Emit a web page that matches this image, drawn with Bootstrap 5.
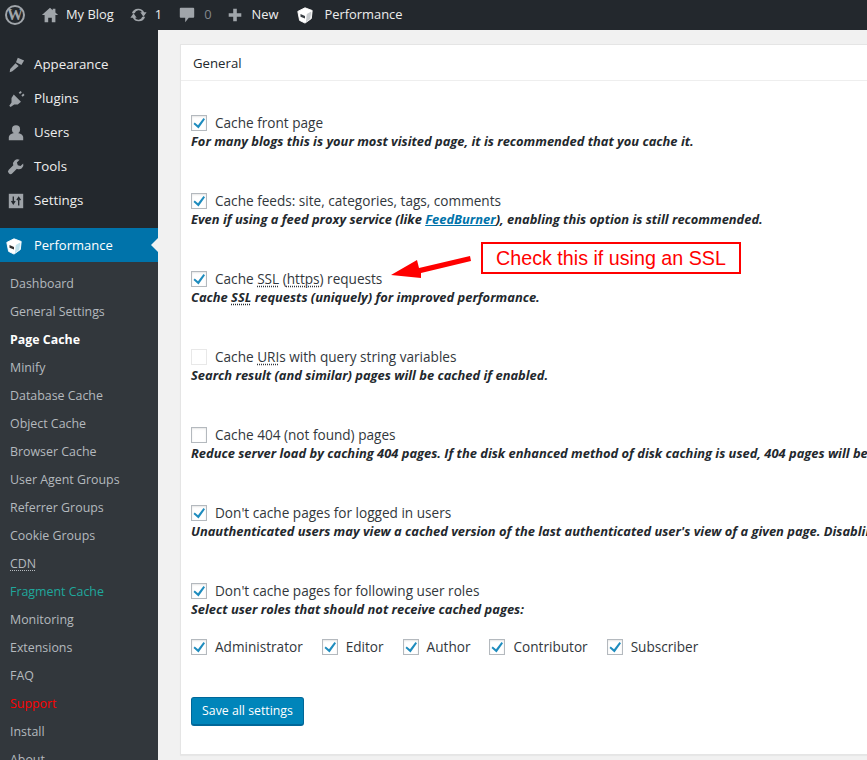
<!DOCTYPE html>
<html lang="en"><head><meta charset="utf-8"><title>Page Cache</title>
<link href="https://cdn.jsdelivr.net/npm/bootstrap@5.3.0/dist/css/bootstrap.min.css" rel="stylesheet">
<style>
html,body{height:760px;overflow:hidden;background:#f1f1f1;font-family:"Open Sans","Noto Sans",sans-serif;font-size:13px;color:#23282d}
.wpbar{height:30px;background:#23282d;color:#eee;font-size:12.9px;padding-left:5px}
.wpbar span.tx{line-height:28px;padding-bottom:2px}
.wpbar svg{fill:#a0a5aa;display:block;flex:none}
.wlogo{width:20px;height:20px;border:2px solid #a0a5aa;border-radius:50%;color:#a0a5aa;font:700 16px/16px "Liberation Serif",serif;text-align:center;flex:none;margin-right:16px}
.m7{margin-right:7px}.m8{margin-right:8px}.m10{margin-right:10px}.m14{margin-right:14px}.m15{margin-right:15px}.m16{margin-right:16px}.m18{margin-right:18px}
.tx.dim{color:#82878c}
.stage{height:730px;position:relative;overflow:hidden}
.sidebar{width:158px;background:#23282d;height:730px;overflow:hidden;flex:none;padding-top:17px}
.mitem{height:34px;color:#eee;font-size:13.3px;padding-left:7px;padding-top:2px;gap:9px}
.mitem svg{fill:#9ea3a8;width:18px;height:18px;flex:none}
.mitem.on{background:#0073aa;color:#fff;margin-top:11px;position:relative;padding-left:5px;gap:11px;font-size:13px}
.mitem.on::after{content:"";position:absolute;right:0;top:10px;border:7px solid transparent;border-right-color:#f1f1f1;border-left:0}
.submenu{background:#32373c;padding-top:8px;height:510px}
.subitem{height:28px;line-height:28px;padding-left:10px;color:#b4b9be;font-size:12.4px}
.subitem.cur{color:#fff;font-weight:700}
.subitem.teal{color:#1fa89c}
.subitem.red{color:#f00}
abbr.dot{text-decoration:underline dotted;text-underline-offset:2px;cursor:help}
.content{padding:14px 0 0 22px;min-width:0;flex:1}
.panel{width:760px;height:711px;background:#fff;border:1px solid #e5e5e5;box-shadow:0 1px 1px rgba(0,0,0,.04)}
.panelhead{height:36px;line-height:36px;padding-left:12px;border-bottom:1px solid #eee;color:#23282d;font-size:13.2px}
.panelbody{padding:33px 0 0 10px;white-space:nowrap}
.opt{height:36px;margin-bottom:42px}
.opt.tail{margin-bottom:20px}
.optline{height:18px;gap:8px;font-size:13.6px;color:#32373c}
.cb{width:16px;height:16px;flex:none;border:1px solid #b4b9be;background:#fff;box-shadow:inset 0 1px 2px rgba(0,0,0,.1);display:block}
.cb svg{display:block;width:14px;height:14px;fill:#1e8cbe}
.cb.off{border-color:#e8e8e8;box-shadow:none}
.hint{line-height:18px;font-style:italic;font-weight:700;font-size:12.9px;color:#23282d}
.hint a{color:#0073aa}
.roles{gap:19px;height:18px}
.saveb{margin-top:41px;display:block;height:29px;width:113px;padding:0;background:#0085ba;border:1px solid #006799;border-bottom-width:2px;border-radius:3px;color:#fff;font-size:12.3px}
.note{position:absolute;left:481px;top:212px;width:260px;height:32px;border:2px solid #f00;background:#fff;color:#f00;font:19.7px/28px "Liberation Sans",sans-serif;text-align:center}
.arrow{position:absolute;left:390px;top:220px;width:84px;height:30px}
</style></head><body>
<header class="wpbar d-flex align-items-center">
 <div class="wlogo">W</div>
 <svg class="m7" width="18" height="18" viewBox="0 0 20 20"><path d="M10 2 1 10h3v8h4v-5h4v5h4v-8h3l-3-2.700V3h-3v1.600z"/></svg><span class="tx m15">My Blog</span>
 <svg class="m7" width="19" height="18" viewBox="0 0 20 20"><path d="M10 3a7 7 0 0 1 6.300 4H19l-3.500 5L12 7h2a4.500 4.500 0 0 0-8.200 1H2.600A7.500 7.500 0 0 1 10 3zM1 13l3.500-5L8 13H6a4.500 4.500 0 0 0 8.200-1h3.200A7.500 7.500 0 0 1 10 17a7 7 0 0 1-6.300-4z"/></svg><span class="tx m16">1</span>
 <svg class="m8" width="18" height="18" viewBox="0 0 20 20"><path d="M3 2h14a1 1 0 0 1 1 1v9a1 1 0 0 1-1 1h-5l-4 5v-5H3a1 1 0 0 1-1-1V3a1 1 0 0 1 1-1z"/></svg><span class="tx dim m14">0</span>
 <svg class="m8" width="18" height="18" viewBox="0 0 20 20"><path d="M8 3h4v5h5v4h-5v5H8v-5H3V8h5z"/></svg><span class="tx m18">New</span>
 <svg class="m10" width="18" height="18" viewBox="0 0 20 20"><path d="M2 6l8-4 8 3-1 9-7 5-6-3z" fill="#fff" stroke="#fff" stroke-linejoin="round"/><path d="M12 9l5-3-1 8-5 4z" fill="#c9cccf"/><path d="M5 9l5 2v3l-5-2z" fill="#3a3f44"/></svg><span class="tx">Performance</span>
</header>
<div class="stage d-flex">
 <nav class="sidebar">
  <div class="mitem d-flex align-items-center"><svg viewBox="0 0 20 20"><path d="M12 2l7 3-3 5-6-3zM9.500 8l3.500 3-7 6-3 1 .5-3.500z"/></svg>Appearance</div>
  <div class="mitem d-flex align-items-center"><svg viewBox="0 0 20 20"><path d="M13 3l2-2 1.500 1.500-2 2zM16 6l2-2 1.500 1.500-2 2zM7.500 5l8 8-3.500 3H8l-4 3-1.500-1.500L5 14V9z"/></svg>Plugins</div>
  <div class="mitem d-flex align-items-center"><svg viewBox="0 0 20 20"><circle cx="10" cy="6" r="4.500"/><path d="M2 18v-3c0-3 3-5 8-5s8 2 8 5v3z"/></svg>Users</div>
  <div class="mitem d-flex align-items-center"><svg viewBox="0 0 20 20"><path d="M18 6l-3 3-3-1-1-3 3-3a5 5 0 0 0-7 6L2 13a2.500 2.500 0 0 0 4 4l5-5a5 5 0 0 0 7-6z"/></svg>Tools</div>
  <div class="mitem d-flex align-items-center"><svg viewBox="0 0 20 20"><path d="M2 2h16v16H2z"/><path d="M7 5v7M5 10l2 3 2-3M13 15V8M11 9l2-3 2 3" fill="none" stroke="#23282d" stroke-width="1.500"/></svg>Settings</div>
  <div class="mitem on d-flex align-items-center"><svg viewBox="0 0 20 20"><path d="M2 6l8-4 8 3-1 9-7 5-6-3z" fill="#fff" stroke="#fff" stroke-linejoin="round"/><path d="M12 9l5-3-1 8-5 4z" fill="#bfe3ee"/><path d="M5 9l5 2v3l-5-2z" fill="#333"/></svg>Performance</div>
  <div class="submenu">
   <div class="subitem">Dashboard</div><div class="subitem">General Settings</div><div class="subitem cur">Page Cache</div><div class="subitem">Minify</div><div class="subitem">Database Cache</div><div class="subitem">Object Cache</div><div class="subitem">Browser Cache</div><div class="subitem">User Agent Groups</div><div class="subitem">Referrer Groups</div><div class="subitem">Cookie Groups</div><div class="subitem"><abbr class="dot">CDN</abbr></div><div class="subitem teal">Fragment Cache</div><div class="subitem">Monitoring</div><div class="subitem">Extensions</div><div class="subitem">FAQ</div><div class="subitem red">Support</div><div class="subitem">Install</div><div class="subitem">About</div>
  </div>
 </nav>
 <main class="content">
  <section class="panel">
   <div class="panelhead">General</div>
   <div class="panelbody">
    <div class="opt"><div class="optline d-flex align-items-center"><span class="cb"><svg viewBox="0 0 14 14"><path d="M11.500 2 13 3.200 6.500 12.500 1.500 8l1.200-1.500 3.300 2.800z"/></svg></span>Cache front page</div><div class="hint">For many blogs this is your most visited page, it is recommended that you cache it.</div></div>
    <div class="opt"><div class="optline d-flex align-items-center"><span class="cb"><svg viewBox="0 0 14 14"><path d="M11.500 2 13 3.200 6.500 12.500 1.500 8l1.200-1.500 3.300 2.800z"/></svg></span>Cache feeds: site, categories, tags, comments</div><div class="hint">Even if using a feed proxy service (like <a href="#">FeedBurner</a>), enabling this option is still recommended.</div></div>
    <div class="opt"><div class="optline d-flex align-items-center"><span class="cb"><svg viewBox="0 0 14 14"><path d="M11.500 2 13 3.200 6.500 12.500 1.500 8l1.200-1.500 3.300 2.800z"/></svg></span><span>Cache <abbr class="dot">SSL</abbr> (<abbr class="dot">https</abbr>) requests</span></div><div class="hint">Cache <abbr class="dot">SSL</abbr> requests (uniquely) for improved performance.</div></div>
    <div class="opt"><div class="optline d-flex align-items-center"><span class="cb off"></span><span>Cache <abbr class="dot">URI</abbr>s with query string variables</span></div><div class="hint">Search result (and similar) pages will be cached if enabled.</div></div>
    <div class="opt"><div class="optline d-flex align-items-center"><span class="cb"></span>Cache 404 (not found) pages</div><div class="hint">Reduce server load by caching 404 pages. If the disk enhanced method of disk caching is used, 404 pages will be returned with a 200 response code.</div></div>
    <div class="opt"><div class="optline d-flex align-items-center"><span class="cb"><svg viewBox="0 0 14 14"><path d="M11.500 2 13 3.200 6.500 12.500 1.500 8l1.200-1.500 3.300 2.800z"/></svg></span>Don't cache pages for logged in users</div><div class="hint">Unauthenticated users may view a cached version of the last authenticated user's view of a given page. Disabling this option is recommended.</div></div>
    <div class="opt tail"><div class="optline d-flex align-items-center"><span class="cb"><svg viewBox="0 0 14 14"><path d="M11.500 2 13 3.200 6.500 12.500 1.500 8l1.200-1.500 3.300 2.800z"/></svg></span>Don't cache pages for following user roles</div><div class="hint">Select user roles that should not receive cached pages:</div></div>
    <div class="roles d-flex">
     <div class="optline d-flex align-items-center"><span class="cb"><svg viewBox="0 0 14 14"><path d="M11.500 2 13 3.200 6.500 12.500 1.500 8l1.200-1.500 3.300 2.800z"/></svg></span>Administrator</div>
     <div class="optline d-flex align-items-center"><span class="cb"><svg viewBox="0 0 14 14"><path d="M11.500 2 13 3.200 6.500 12.500 1.500 8l1.200-1.500 3.300 2.800z"/></svg></span>Editor</div>
     <div class="optline d-flex align-items-center"><span class="cb"><svg viewBox="0 0 14 14"><path d="M11.500 2 13 3.200 6.500 12.500 1.500 8l1.200-1.500 3.300 2.800z"/></svg></span>Author</div>
     <div class="optline d-flex align-items-center"><span class="cb"><svg viewBox="0 0 14 14"><path d="M11.500 2 13 3.200 6.500 12.500 1.500 8l1.200-1.500 3.300 2.800z"/></svg></span>Contributor</div>
     <div class="optline d-flex align-items-center"><span class="cb"><svg viewBox="0 0 14 14"><path d="M11.500 2 13 3.200 6.500 12.500 1.500 8l1.200-1.500 3.300 2.800z"/></svg></span>Subscriber</div>
    </div>
    <button type="button" class="btn saveb">Save all settings</button>
   </div>
  </section>
 </main>
 <svg class="arrow" viewBox="0 0 84 30"><path d="M1 25 27 10 29 18 80 6 81 11 31 23 31 28z" fill="#f00"/></svg>
 <div class="note">Check this if using an SSL</div>
</div>
</body></html>
